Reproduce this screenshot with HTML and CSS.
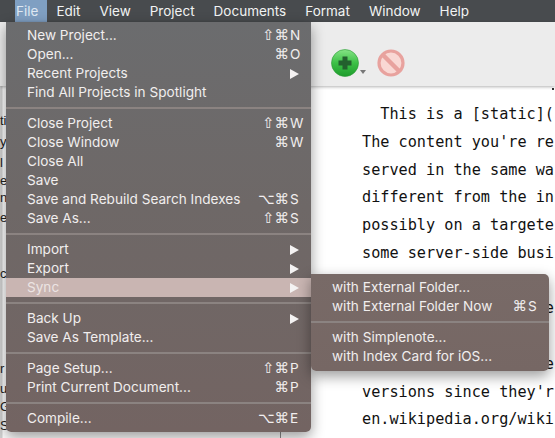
FILE: index.html
```html
<!DOCTYPE html>
<html lang="en">
<head>
  <meta charset="UTF-8" />
  <title>File menu</title>
  <link rel="stylesheet" href="styles.css">
</head>
<body>

  <!-- Menu bar -->
  <div class="menubar">
    <span class="bar-item active">File</span>
    <span class="bar-item">Edit</span>
    <span class="bar-item">View</span>
    <span class="bar-item">Project</span>
    <span class="bar-item">Documents</span>
    <span class="bar-item">Format</span>
    <span class="bar-item">Window</span>
    <span class="bar-item">Help</span>
  </div>

  <!-- Toolbar -->
  <div class="toolbar">
    <svg width="28" height="28" viewBox="0 0 28 28">
      <defs>
        <linearGradient id="green" x1="0" y1="0" x2="0" y2="1">
          <stop offset="0" stop-color="#86e486"/>
          <stop offset="0.5" stop-color="#3cc046"/>
          <stop offset="1" stop-color="#1e9c2c"/>
        </linearGradient>
      </defs>
      <circle cx="14" cy="14" r="13.5" fill="url(#green)" stroke="#2c9a36" stroke-width="0.6"/>
      <path d="M11.5 7.5h5v4h4v5h-4v4h-5v-4h-4v-5h4z" fill="#23602e"/>
    </svg>
    <span class="tool-caret"></span>
    <svg width="28" height="28" viewBox="0 0 28 28">
      <circle cx="14" cy="14" r="12" fill="#f9d8d4" stroke="#e8a29e" stroke-width="3.2"/>
      <path d="M5.5 5.5L22.5 22.5" stroke="#e8a29e" stroke-width="4.5"/>
    </svg>
  </div>

  <!-- Document area -->
  <div class="workspace">
    <div class="sidebar">
      <p class="clip l1">ti</p>
      <p class="clip l2">y</p>
      <p class="clip l3">l</p>
      <p class="clip l4">e</p>
      <p class="clip l5">n</p>
      <p class="clip l6">e</p>
      <p class="clip l7">c</p>
      <p class="clip l8">r</p>
      <p class="clip l9">u</p>
      <p class="clip l10">G</p>
      <p class="clip l11">S</p>
    </div>
    <div class="editor">
      <span class="mark"></span>
      <pre class="source">  This is a [static](
The content you're re
served in the same wa
different from the in
possibly on a targete
some server-side busi

                    e

                    e
versions since they'r
en.wikipedia.org/wiki</pre>
    </div>
  </div>

  <!-- File menu -->
  <div class="menu file-menu">
    <div class="row"><span>New Project...</span><span class="key"><span class="mod">⇧⌘</span><span class="letter">N</span></span></div>
    <div class="row"><span>Open...</span><span class="key"><span class="mod">⌘</span><span class="letter">O</span></span></div>
    <div class="row"><span>Recent Projects</span><span class="arrow"></span></div>
    <div class="row"><span>Find All Projects in Spotlight</span></div>
    <div class="sep"></div>
    <div class="row"><span>Close Project</span><span class="key"><span class="mod">⇧⌘</span><span class="letter">W</span></span></div>
    <div class="row"><span>Close Window</span><span class="key"><span class="mod">⌘</span><span class="letter">W</span></span></div>
    <div class="row"><span>Close All</span></div>
    <div class="row"><span>Save</span></div>
    <div class="row"><span>Save and Rebuild Search Indexes</span><span class="key"><span class="mod">⌥⌘</span><span class="letter">S</span></span></div>
    <div class="row"><span>Save As...</span><span class="key"><span class="mod">⇧⌘</span><span class="letter">S</span></span></div>
    <div class="sep"></div>
    <div class="row"><span>Import</span><span class="arrow"></span></div>
    <div class="row"><span>Export</span><span class="arrow"></span></div>
    <div class="row selected"><span>Sync</span><span class="arrow"></span></div>
    <div class="sep"></div>
    <div class="row"><span>Back Up</span><span class="arrow"></span></div>
    <div class="row"><span>Save As Template...</span></div>
    <div class="sep"></div>
    <div class="row"><span>Page Setup...</span><span class="key"><span class="mod">⇧⌘</span><span class="letter">P</span></span></div>
    <div class="row"><span>Print Current Document...</span><span class="key"><span class="mod">⌘</span><span class="letter">P</span></span></div>
    <div class="sep"></div>
    <div class="row"><span>Compile...</span><span class="key"><span class="mod">⌥⌘</span><span class="letter">E</span></span></div>
  </div>

  <!-- Sync submenu -->
  <div class="menu sync-menu">
    <div class="row"><span>with External Folder...</span></div>
    <div class="row"><span>with External Folder Now</span><span class="key"><span class="mod">⌘</span><span class="letter">S</span></span></div>
    <div class="sep"></div>
    <div class="row"><span>with Simplenote...</span></div>
    <div class="row"><span>with Index Card for iOS...</span></div>
  </div>

</body>
</html>
```

FILE: styles.css
```css
html, body {
  margin: 0;
  height: 100%;
  overflow: hidden;
}

body {
  width: 555px;
  height: 438px;
  display: flex;
  flex-direction: column;
  font-family: Inter, "Liberation Sans", sans-serif;
  background-color: #fff;
}

.menubar {
  height: 22px;
  flex: none;
  display: flex;
  padding-left: 15px;
  background-color: #484b4e;
  color: #f2f3f3;
  font-size: 13.5px;
  line-height: 22px;
}

.bar-item {
  padding: 0 9.5px;
}

.bar-item.active {
  padding: 0 8.5px 0 1px;
  background-color: #7f9fc2;
  color: #dfe8f2;
}

.toolbar {
  height: 64px;
  flex: none;
  display: flex;
  align-items: flex-start;
  box-sizing: border-box;
  padding: 27px 0 0 331px;
  background-color: #ececec;
  box-shadow: 0 1px 3px rgba(0,0,0,0.3);
  z-index: 1;
}

.tool-caret {
  width: 0;
  height: 0;
  margin: 21px 11px 0 1px;
  border-left: 3px solid transparent;
  border-right: 3px solid transparent;
  border-top: 4px solid #777;
}

.workspace {
  flex: 1;
  display: flex;
  min-height: 0;
}

.sidebar {
  width: 281px;
  flex: none;
  box-sizing: border-box;
  border-right: 1px solid #8c8c8c;
  background: linear-gradient(90deg, #d2d2d2 2px, #fff 3px);
  font-family: "Liberation Sans", sans-serif;
  font-size: 13px;
  color: #222;
}

.clip {
  margin: 0;
  line-height: 15px;
}

.l1 { margin-top: 27px; }
.l2 { margin-top: 6px; }
.l3 { margin-top: 6px; }
.l4 { margin-top: 3px; }
.l5 { margin-top: 2px; }
.l6 { margin-top: 5px; }
.l7 { margin-top: 41px; }
.l8 { margin-top: 80px; }
.l9 { margin-top: 5px; }
.l10 { margin-top: 3px; }
.l11 { margin-top: 4px; }

.editor {
  flex: 1;
  position: relative;
  overflow: hidden;
  padding: 15px 0 0 81px;
}

.mark {
  position: absolute;
  top: 2px;
  right: 1px;
  width: 2px;
  height: 2px;
  background-color: #333;
}

.source {
  margin: 0;
  font-family: "DejaVu Sans Mono", monospace;
  font-size: 15.2px;
  line-height: 27.75px;
  color: #111;
}

.menu {
  position: absolute;
  z-index: 2;
  box-sizing: border-box;
  padding: 4px 0;
  color: #f1eeee;
  font-size: 13.6px;
  box-shadow: 0 5px 14px rgba(0,0,0,0.4);
}

.file-menu {
  left: 6px;
  top: 22px;
  width: 305px;
  height: 410px;
  border-radius: 0 0 5px 5px;
  background: linear-gradient(#6b6c6e, #6e6867 45%, #736462);
}

.sync-menu {
  left: 311px;
  top: 274px;
  width: 238px;
  height: 97px;
  border-radius: 0 5px 5px 5px;
  background: linear-gradient(#786a67, #766764);
}

.row {
  height: 19px;
  line-height: 19px;
  display: flex;
  justify-content: space-between;
  align-items: center;
  padding: 0 8px 0 21px;
}

.selected {
  background-color: #c9b5b2;
  color: #ece4e3;
}

.key {
  display: flex;
  align-items: center;
}

.mod {
  font-family: "DejaVu Sans", sans-serif;
  font-size: 14.5px;
}

.letter {
  width: 13px;
  margin-left: 1px;
}

.arrow {
  width: 0;
  height: 0;
  margin-right: 4px;
  border-top: 5px solid transparent;
  border-bottom: 5px solid transparent;
  border-left: 9px solid #f4f2f2;
}

.sep {
  height: 2px;
  margin: 5px 0;
  background-color: #8b8381;
}
```
